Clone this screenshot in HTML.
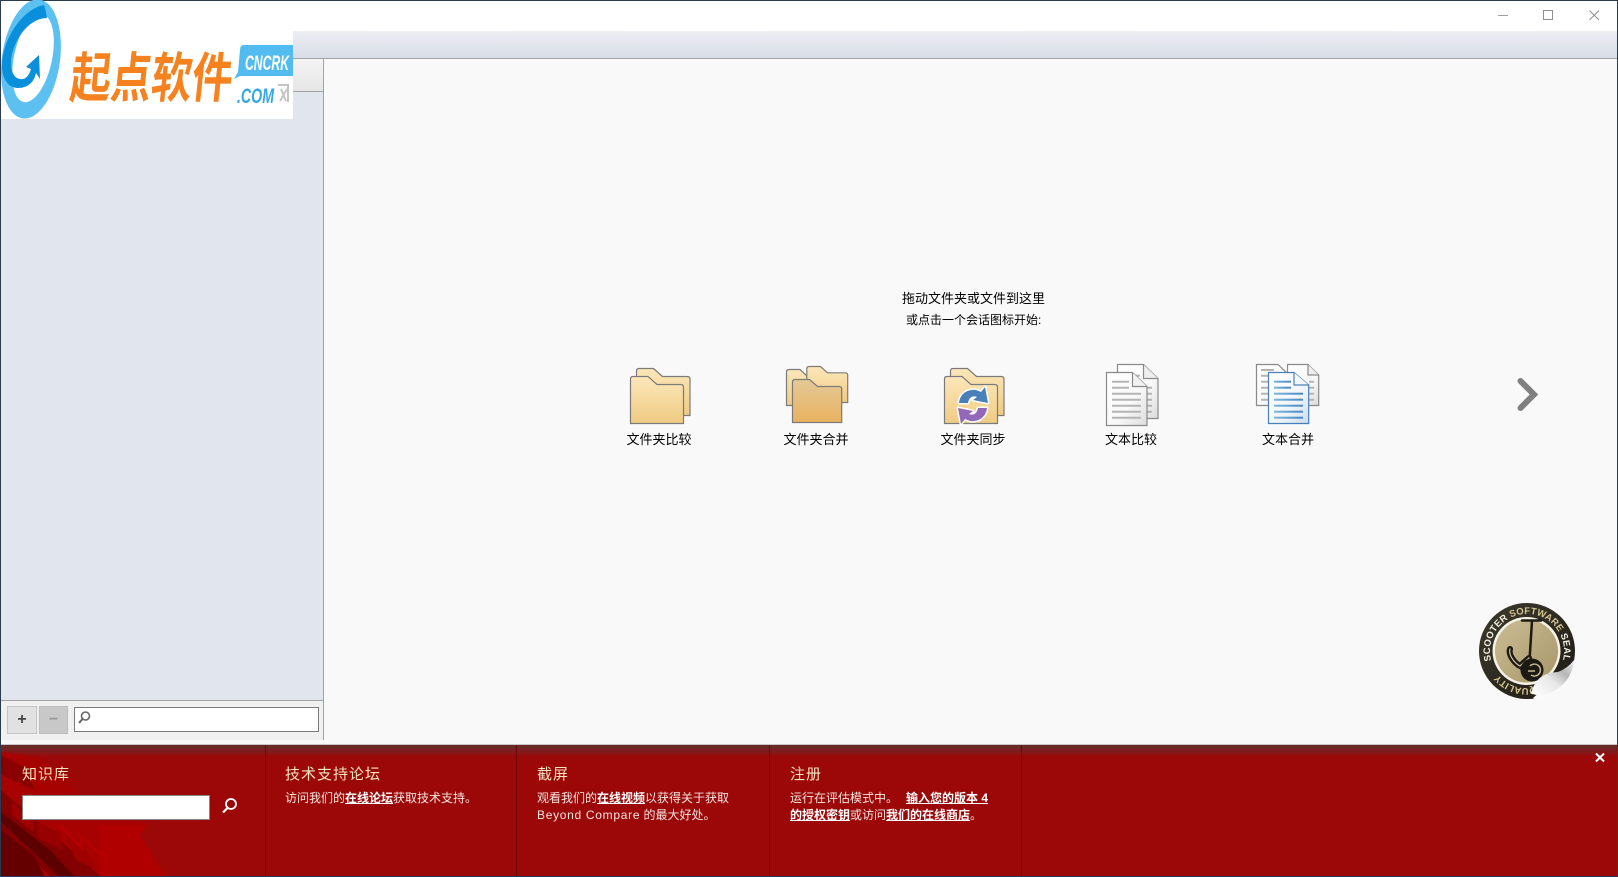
<!DOCTYPE html>
<html lang="zh"><head><meta charset="utf-8"><title>Beyond Compare</title>
<style>
html,body{margin:0;padding:0;width:1618px;height:877px;overflow:hidden;background:#f9f9f9}
body{position:relative;font-family:"Liberation Sans","WenQuanYi Zen Hei","Noto Sans CJK SC",sans-serif;font-size:12px;color:#000}
div{position:absolute;box-sizing:border-box}
.t{white-space:nowrap;line-height:18px}
.lbl{font-size:13px;text-align:center;width:100px;top:431px;height:18px;line-height:18px}
.h{color:#f3e3c0;font-size:15px;letter-spacing:1px;top:766px;line-height:18px;white-space:nowrap}
.b{color:#f4e6e0;font-size:12px;line-height:18px;white-space:nowrap}
.b a{color:#fff;font-weight:bold;text-decoration:underline}
svg{position:absolute;left:0;top:0}
</style></head><body>
<div style="left:0;top:0;width:1618px;height:31px;background:#fff"></div>
<div style="left:0;top:31px;width:1618px;height:28px;background:linear-gradient(#eceef3,#d8dde6);border-bottom:1px solid #a3a3a3"></div>
<div style="left:0;top:59px;width:324px;height:681px;background:#e1e5ee;border-right:1px solid #a3a3a3"></div>
<div style="left:0;top:59px;width:323px;height:33px;background:linear-gradient(#f4f4f4,#e6e6e6);border-bottom:1px solid #a3a3a3"></div>
<div style="left:0;top:700px;width:323px;height:40px;background:#f0f0f0;border-top:1px solid #a3a3a3"></div>
<div style="left:7px;top:706px;width:30px;height:28px;background:#e1e1e1;border:1px solid #c4c4c4;text-align:center;font:bold 16px/26px 'Liberation Sans',sans-serif;color:#444">+</div>
<div style="left:39px;top:706px;width:29px;height:28px;background:#c8c8c8;border:1px solid #bdbdbd;text-align:center;font:bold 16px/26px 'Liberation Sans',sans-serif;color:#999">−</div>
<div style="left:74px;top:707px;width:245px;height:25px;background:#fff;border:1px solid #7a7a7a"></div>

<div class="t" style="left:902px;top:290px;font-size:13px">拖动文件夹或文件到这里</div>
<div class="t" style="left:906px;top:311px;font-size:12px">或点击一个会话图标开始:</div>
<div class="lbl" style="left:609px">文件夹比较</div>
<div class="lbl" style="left:766px">文件夹合并</div>
<div class="lbl" style="left:923px">文件夹同步</div>
<div class="lbl" style="left:1081px">文本比较</div>
<div class="lbl" style="left:1238px">文本合并</div>

<div style="left:0;top:744px;width:1618px;height:133px;background:linear-gradient(#6a2a2a 0,#6a2a2a 2px,#9c0808 12px);border-top:1px solid #c8c8c8"></div>

<svg width="1618" height="877" viewBox="0 0 1618 877" xmlns="http://www.w3.org/2000/svg">
<defs>
<linearGradient id="f1" x1="0" y1="0" x2="0" y2="1"><stop offset="0" stop-color="#fce7ba"/><stop offset="1" stop-color="#efcb82"/></linearGradient>
<linearGradient id="f2" x1="0" y1="0" x2="0" y2="1"><stop offset="0" stop-color="#e4c897"/><stop offset="1" stop-color="#e9b25f"/></linearGradient>
<linearGradient id="d1" x1="0" y1="0" x2="1" y2="1"><stop offset="0" stop-color="#fff"/><stop offset=".6" stop-color="#f8f8f8"/><stop offset="1" stop-color="#dcdcdc"/></linearGradient>
<linearGradient id="d2" x1="0" y1="0" x2="1" y2="1"><stop offset="0" stop-color="#fff"/><stop offset=".6" stop-color="#f2f6fb"/><stop offset="1" stop-color="#c9dcef"/></linearGradient>
<linearGradient id="ln" x1="0" y1="0" x2="1" y2="0"><stop offset="0" stop-color="#7ab8de"/><stop offset="1" stop-color="#4a86c0"/></linearGradient>
<linearGradient id="tan" x1="0" y1="0" x2="1" y2="1"><stop offset="0" stop-color="#cbbd94"/><stop offset="1" stop-color="#a8966a"/></linearGradient>
<linearGradient id="peel" x1="0" y1="1" x2="1" y2="0"><stop offset="0" stop-color="#fff"/><stop offset=".45" stop-color="#e8e8e8"/><stop offset=".7" stop-color="#b5b5b5"/><stop offset="1" stop-color="#f2f2f2"/></linearGradient>
<linearGradient id="ring" x1="0" y1="0" x2="1" y2="1"><stop offset="0" stop-color="#3d3a2c"/><stop offset="1" stop-color="#1d1b14"/></linearGradient>
<path id="arcTop" d="M1491.300 660.600A37 37 0 1 1 1562.700 660.600"/>
<path id="arcBot" d="M1536 687A37 37 0 0 1 1497 673"/>
<clipPath id="redclip"><path d="M1 752L40 757 70 785 100 815 148 823 140 835 165 876H1Z"/></clipPath>
</defs>

<!-- window border -->
<rect x="0" y="0" width="1618" height="1" fill="#2b3a4e"/>
<rect x="0" y="0" width="1" height="877" fill="#2b3a4e"/>
<rect x="1617" y="0" width="1" height="877" fill="#2b3a4e"/>
<rect x="0" y="876" width="1618" height="1" fill="#2b3a4e"/>

<!-- window controls -->
<path d="M1498 15.500H1508" stroke="#a0a0a0" fill="none"/>
<rect x="1543.500" y="10.500" width="9" height="9" stroke="#8f8f8f" fill="none"/>
<path d="M1589.500 10.500L1599 20M1599 10.500L1589.500 20" stroke="#8f8f8f" fill="none"/>

<!-- logo -->
<rect x="1" y="1" width="292" height="118" fill="#fff"/>
<g>
<ellipse cx="31" cy="59" rx="29" ry="60" transform="rotate(8 31 59)" fill="#5cc0f1"/>
<ellipse cx="33" cy="58" rx="19" ry="45" transform="rotate(12 33 58)" fill="#fff"/>
<path d="M44 5C22 9 2 40 2 66 2 78 8 88 18 88 28 88 34 82 36 73L40 79 39 55 26 67 31 69C29 76 25 80 20 79 14 78 11 72 11 62 12 42 28 18 47 18 46 12 45 8 44 5Z" fill="#0a8fdc"/>
<text x="69" y="97" font-family="'Noto Sans CJK SC',sans-serif" font-weight="700" font-size="54" fill="#f5821f" textLength="162" lengthAdjust="spacingAndGlyphs" transform="skewX(-6) translate(10 0)">起点软件</text>
<path d="M243 45H293V76H240L234 79 238 72 240 50Q240 46 243 45Z" fill="#52bcf0"/>
<text x="245" y="70" font-family="'Liberation Sans',sans-serif" font-weight="bold" font-style="italic" font-size="21" fill="#fff" textLength="44" lengthAdjust="spacingAndGlyphs">CNCRK</text>
<text x="237" y="103" font-family="'Liberation Sans',sans-serif" font-weight="bold" font-style="italic" font-size="21" fill="#35a7e6" textLength="37" lengthAdjust="spacingAndGlyphs">.COM</text>
<path d="M278 85H288V102M281 89L286 101M287 89L280 101" stroke="#c4c4c4" stroke-width="2" fill="none"/>
</g>

<!-- sidebar search glass -->
<circle cx="85.500" cy="716" r="4" fill="none" stroke="#666" stroke-width="1.600"/>
<path d="M82.500 719L79 723" stroke="#666" stroke-width="2"/>

<!-- folder 1 -->
<path d="M636.500 415.500V371Q636.500 368.500 639 368.500H653.500L662.500 376.500H687Q690 376.500 690 379V415.500Z" fill="url(#f1)" stroke="#7b7b7b" stroke-width="1.200"/>
<path d="M630.500 423.500V379Q630.500 376.500 633 376.500H648L657 384.500H680.500Q683.500 384.500 683.500 387V423.500Z" fill="url(#f1)" stroke="#7b7b7b" stroke-width="1.200"/>
<!-- folder 2 -->
<path d="M786.500 405.500V372Q786.500 369.500 789 369.500H800L807 376V405.500Z" fill="url(#f1)" stroke="#7b7b7b" stroke-width="1.200"/>
<path d="M806.800 402.500V369Q806.800 366.500 809 366.500H820.500L827.500 372.800H845Q847.700 372.800 847.700 375V402.500Z" fill="url(#f1)" stroke="#7b7b7b" stroke-width="1.200"/>
<path d="M792.500 422.500V382Q792.500 379.500 795 379.500H809.500L817.500 386.500H839Q841.700 386.500 841.700 389V422.500Z" fill="url(#f2)" stroke="#7b7b7b" stroke-width="1.200"/>
<!-- folder 3 -->
<path d="M950.500 415.500V371Q950.500 368.500 953 368.500H967.500L976.500 376.500H1001Q1004 376.500 1004 379V415.500Z" fill="url(#f1)" stroke="#7b7b7b" stroke-width="1.200"/>
<path d="M944.500 423.500V379Q944.500 376.500 947 376.500H962L971 384.500H994.500Q997.500 384.500 997.500 387V423.500Z" fill="url(#f1)" stroke="#7b7b7b" stroke-width="1.200"/>
<path d="M959 403C960 394 967 389 976 390L981 392 985 387 988 403 973 400 977 397C972 395 969 398 968 403Z" fill="#4a80b8" stroke="#fff" stroke-width="3" paint-order="stroke" stroke-linejoin="round"/>
<path d="M959 403C960 394 967 389 976 390L981 392 985 387 988 403 973 400 977 397C972 395 969 398 968 403Z" transform="rotate(180 973 405.500)" fill="#9468b8" stroke="#fff" stroke-width="3" paint-order="stroke" stroke-linejoin="round"/>

<!-- doc 1 -->
<path d="M1117.500 364.500H1143.500L1158 378.500V418.500H1117.500Z" fill="url(#d1)" stroke="#8a8a8a" stroke-width="1.200"/>
<path d="M1143.500 364.500V378.500H1158" fill="#eee" stroke="#8a8a8a" stroke-width="1.200"/>
<path d="M1135 375.700H1140M1147 387.700H1152M1147 393.700H1152M1147 399.700H1152M1147 405.700H1152M1147 411.700H1152" stroke="#b4b4b4" stroke-width="2"/>
<path d="M1106.500 372.500H1132.500L1147 386.500V425.500H1106.500Z" fill="url(#d1)" stroke="#8a8a8a" stroke-width="1.200"/>
<path d="M1132.500 372.500V386.500H1147" fill="#f2f2f2" stroke="#8a8a8a" stroke-width="1.200"/>
<path d="M1112 381.700H1129M1112 387.700H1129M1112 393.700H1141M1112 399.700H1141M1112 405.700H1141M1112 411.700H1141M1112 417.700H1141" stroke="#b4b4b4" stroke-width="2"/>
<!-- doc 2 -->
<path d="M1256.500 364.500H1278L1290 376V405.500H1256.500Z" fill="url(#d1)" stroke="#8a8a8a" stroke-width="1.200"/>
<path d="M1261 370H1274M1261 375.700H1272M1261 381.700H1268M1261 387.700H1268M1261 393.700H1268M1261 399.700H1268" stroke="#b4b4b4" stroke-width="2"/>
<path d="M1287.500 364.500H1308L1318.700 375V405.500H1287.500Z" fill="url(#d1)" stroke="#8a8a8a" stroke-width="1.200"/>
<path d="M1308 364.500V375H1318.700" fill="#eee" stroke="#8a8a8a" stroke-width="1.200"/>
<path d="M1309 381.700H1314M1309 387.700H1314M1309 393.700H1314M1309 399.700H1314" stroke="#b4b4b4" stroke-width="2"/>
<path d="M1268.500 372.500H1294L1308.700 385V423.500H1268.500Z" fill="url(#d2)" stroke="#4a80b8" stroke-width="1.200"/>
<path d="M1294 372.500V385H1308.700" fill="#f4f8fc" stroke="#4a80b8" stroke-width="1.200"/>
<g fill="url(#ln)"><rect x="1274" y="380.700" width="17" height="2"/><rect x="1274" y="386.700" width="17" height="2"/><rect x="1274" y="392.700" width="29" height="2"/><rect x="1274" y="398.700" width="29" height="2"/><rect x="1274" y="404.700" width="29" height="2"/><rect x="1274" y="410.700" width="29" height="2"/><rect x="1274" y="416.700" width="29" height="2"/></g>
<!-- chevron -->
<path d="M1520.500 381L1534 394.500 1520.500 408" fill="none" stroke="#808080" stroke-width="6" stroke-linecap="round" stroke-linejoin="miter"/>

<!-- seal -->
<circle cx="1527" cy="651" r="48" fill="url(#ring)"/>
<circle cx="1526.500" cy="651" r="34" fill="#f4f1e6"/>
<circle cx="1526.500" cy="651" r="31.500" fill="url(#tan)"/>
<path d="M1522 620.500H1541M1532 621L1529 668" stroke="#1c1a14" stroke-width="2.500" fill="none" stroke-linecap="round"/>
<path d="M1510 649C1508 656 1516 664 1520 666L1529 658" stroke="#1c1a14" stroke-width="6" fill="none" stroke-linecap="round"/>
<path d="M1510 649C1508 656 1516 664 1520 666L1529 658" stroke="#c9bb92" stroke-width="1.300" fill="none" stroke-linecap="round"/>
<circle cx="1532" cy="670" r="11.500" fill="#1c1a14"/>
<path d="M1530 666A6 6 0 1 1 1531 675M1528 671H1535" stroke="#c9bb92" stroke-width="1.400" fill="none"/>
<text font-family="'Liberation Sans',sans-serif" font-weight="bold" font-size="9.500" fill="#f1eee2" textLength="135"><textPath href="#arcTop">SCOOTER <tspan fill="#d3c490">SOFTWARE</tspan> SEAL</textPath></text>
<text font-family="'Liberation Sans',sans-serif" font-weight="bold" font-size="9.500" fill="#d3c490"><textPath href="#arcBot">QUALITY</textPath></text>
<path d="M1533 698L1576 660 1560 690 1540 700Z" fill="#fafafa"/>
<path d="M1531 693Q1537 672 1558 672 1568 668 1574 660 1572 682 1552 692 1540 698 1531 693Z" fill="url(#peel)"/>

<!-- red texture -->
<g clip-path="url(#redclip)">
<rect x="0" y="745" width="180" height="132" fill="#a60202"/>
<rect x="100" y="825" width="70" height="52" fill="#b00000"/>
<path d="M1 755L25 768 35 790 1 775Z" fill="#8a0000"/>
<path d="M1 790L60 840 100 876H50L1 830Z" fill="#820000"/>
<path d="M1 830L34 856 45 877H1Z" fill="#650000"/>
<path d="M1 812L50 850 75 877H60L1 822Z" fill="#5d0000"/>
<path d="M12 802L34 822V832L12 815Z" fill="#a00000"/>
<path d="M36 822L60 832 62 850 38 838Z" fill="#980000"/>
<path d="M66 835L80 840 98 870 76 860Z" fill="#a00000"/>
<path d="M60 826L82 848 80 836 110 862" stroke="#b50000" stroke-width="3" fill="none"/>
<path d="M1 775L60 830" stroke="#ab0000" stroke-width="3"/>
</g>

<!-- red dividers -->
<path d="M265.500 745V876M516.500 745V876M769.500 745V876M1021.500 745V876" stroke="#6c0606" stroke-width="1"/>

<!-- kb glass -->
<circle cx="231" cy="804" r="5" fill="none" stroke="#fff" stroke-width="1.800"/>
<path d="M227.500 808L223 812.500" stroke="#fff" stroke-width="2.200"/>
<!-- close x -->
<path d="M1596 753.500L1604 761.500M1604 753.500L1596 761.500" stroke="#fff" stroke-width="2"/>
</svg>

<div style="left:22px;top:795px;width:188px;height:25px;background:#fff;border:1px solid #888"></div>
<div class="h" style="left:22px">知识库</div>
<div class="h" style="left:285px">技术支持论坛</div>
<div class="h" style="left:537px">截屏</div>
<div class="h" style="left:790px">注册</div>
<div class="b" style="left:285px;top:789px">访问我们的<a>在线论坛</a>获取技术支持。</div>
<div class="b" style="left:537px;top:789px">观看我们的<a>在线视频</a>以获得关于获取</div>
<div class="b" style="left:537px;top:806px"><span style="letter-spacing:.7px">Beyond Compare</span> 的最大好处。</div>
<div class="b" style="left:790px;top:789px">运行在评估模式中。 &nbsp; <a style="margin-left:-2px">输入您的版本 4</a></div>
<div class="b" style="left:790px;top:806px"><a>的授权密钥</a>或访问<a>我们的在线商店</a>。</div>
</body></html>
